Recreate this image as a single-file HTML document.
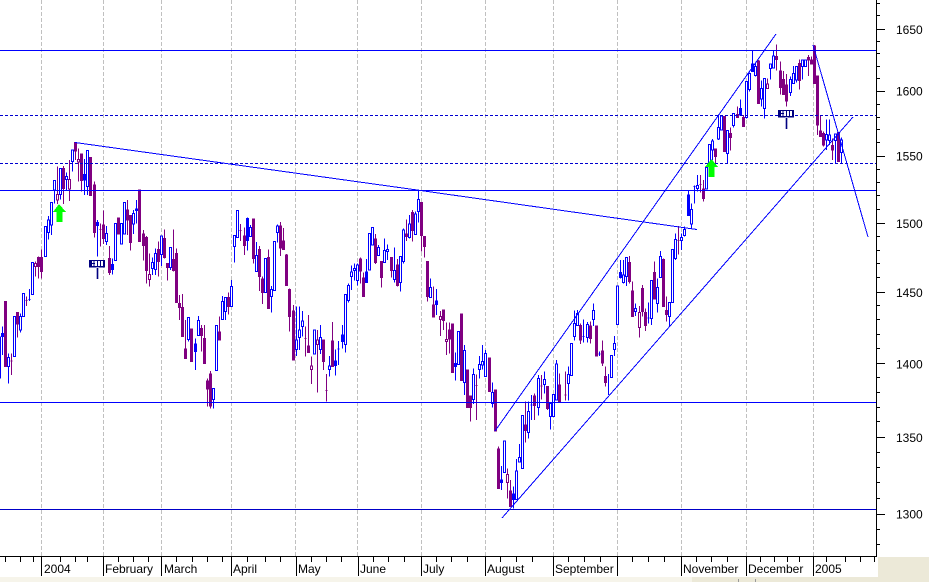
<!DOCTYPE html>
<html><head><meta charset="utf-8"><style>
html,body{margin:0;padding:0;background:#fff;width:929px;height:582px;overflow:hidden}
svg{display:block;position:absolute;left:0;top:0}
text{font:12px "Liberation Sans",sans-serif;fill:#000}
.c path{vector-effect:non-scaling-stroke;stroke-width:1px}
.bw{stroke:#00f;fill:none}.pw{stroke:#800080;fill:none}
.bh{stroke:#00f;fill:#fff}.ph{stroke:#800080;fill:#fff}
.bf{stroke:#00f;fill:#00f}.pf{stroke:#800080;fill:#800080}
</style></head><body>
<svg width="929" height="582" viewBox="0 0 929 582" shape-rendering="crispEdges">
<rect x="0" y="0" width="929" height="582" fill="#fff"/>
<rect x="878" y="557" width="51" height="25" fill="#ece9d8"/>
<rect x="0" y="577" width="929" height="5" fill="#ece9d8"/>
<rect x="0" y="577" width="692" height="5" fill="#f6f4ea"/>
<path d="M738.5 579V582M755.5 579V582" stroke="#999" fill="none"/>
<path d="M41.5 0V556M103.5 0V556M161.5 0V556M231.5 0V556M295.5 0V556M357.5 0V556M421.5 0V556M485.5 0V556M553.5 0V556M617.5 0V556M681.5 0V556M746.5 0V556M813.5 0V556" stroke="#c0c0c0" stroke-dasharray="4 2" fill="none"/>

<g class="c" transform="translate(0,140) scale(1,.33333)">
<path class="bw" d="M.5 590V715M2.5 560V645M8.5 640V730M20.5 520V578M29.5 447V483M48.5 228V298M51.5 187V285M54.5 121V190M60.5 85V178M66.5 97V150M72.5 30V95M84.5 57V165M87.5 32V165M97.5 240V350M106.5 258V315M112.5 355V403M133.5 210V282M136.5 180V250"/>
<path class="pw" d="M11.5 640V705M17.5 517V592M26.5 470V498M35.5 365V410M38.5 350V415M41.5 328V415M57.5 80V192M63.5 78V192M69.5 60V183M75.5 8V60M78.5 25V125M81.5 42V155M94.5 125V292M100.5 250V320M103.5 212V312M109.5 318V405M127.5 180V285M130.5 227V332M143.5 270V362"/>
<path class="bh" d="M7.5 652h2V680h-2zM13.5 530h2V650h-2zM19.5 530h2V570h-2zM22.5 460h2V530h-2zM31.5 367h2V464h-2zM44.5 260h2V350h-2zM47.5 240h2V278h-2zM50.5 187h2V255h-2zM53.5 121h2V150h-2zM59.5 85h2V163h-2zM65.5 110h2V118h-2zM71.5 30h2V65h-2zM86.5 32h2V140h-2zM105.5 280h2V305h-2zM114.5 250h2V362h-2zM120.5 250h2V312h-2zM123.5 187h2V282h-2zM132.5 220h2V252h-2z"/>
<path class="ph" d="M34.5 370h2V380h-2zM56.5 163h2V180h-2zM68.5 118h2V147h-2zM77.5 58h2V66h-2z"/>
<path class="bf" d="M1.5 580h2V590h-2zM28.5 478h2M83.5 103h2V120h-2zM96.5 247h2V257h-2zM111.5 373h2V388h-2zM135.5 207h2V212h-2z"/>
<path class="pf" d="M4.5 485h2V680h-2zM10.5 663h2M16.5 517h2V552h-2zM25.5 482h2M37.5 352h2V380h-2zM40.5 352h2V395h-2zM62.5 85h2V145h-2zM74.5 8h2V33h-2zM80.5 42h2V122h-2zM89.5 52h2V167h-2zM93.5 135h2V278h-2zM99.5 269h2M102.5 255h2V295h-2zM108.5 355h2V398h-2zM117.5 234h2V282h-2zM126.5 210h2V240h-2zM129.5 227h2V307h-2zM138.5 150h2V305h-2zM142.5 282h2V317h-2z"/>
</g>

<g class="c" transform="translate(0,180) scale(1,.33333)">
<path class="pw" d="M146.5 168V310M149.5 220V320M158.5 185V290M164.5 148V235M167.5 250V302M173.5 148V275M176.5 205V368M179.5 345V420M182.5 342V470M185.5 420V536M201.5 435V515M204.5 435V551M207.5 595V680M210.5 573V685M219.5 410V480M228.5 338V403M240.5 132V183M244.5 142V225M253.5 115V250M259.5 198V333M262.5 290V372M268.5 208V386M280.5 126V228M283.5 144V210M286.5 222V317M289.5 325V455M293.5 375V540"/>
<path class="bw" d="M152.5 232V285M155.5 205V285M161.5 168V258M170.5 203V270M188.5 412V485M195.5 475V570M198.5 408V466M213.5 625V685M222.5 348V418M225.5 352V420M231.5 300V380M234.5 166V248M247.5 112V212M250.5 135V170M256.5 186V276M271.5 318V398M277.5 133V188"/>
<path class="pf" d="M145.5 173h2V272h-2zM157.5 208h2V245h-2zM163.5 175h2V233h-2zM166.5 250h2V263h-2zM172.5 238h2V272h-2zM175.5 220h2V368h-2zM178.5 370h2V383h-2zM181.5 382h2V470h-2zM184.5 507h2V536h-2zM190.5 447h2V545h-2zM200.5 445h2V467h-2zM203.5 475h2V551h-2zM206.5 603h2V627h-2zM209.5 582h2V678h-2zM218.5 456h2V480h-2zM227.5 352h2V380h-2zM239.5 152h2M243.5 168h2V197h-2zM252.5 117h2V236h-2zM258.5 208h2V290h-2zM261.5 297h2V337h-2zM267.5 232h2V386h-2zM279.5 138h2V204h-2zM282.5 183h2V208h-2zM285.5 225h2V317h-2zM288.5 328h2V410h-2zM292.5 393h2V540h-2z"/>
<path class="ph" d="M148.5 283h2V298h-2z"/>
<path class="bh" d="M151.5 248h2V265h-2zM154.5 220h2V268h-2zM160.5 168h2V223h-2zM169.5 203h2V262h-2zM187.5 412h2V478h-2zM197.5 422h2V466h-2zM212.5 625h2V658h-2zM215.5 436h2V571h-2zM221.5 364h2V418h-2zM224.5 352h2V394h-2zM230.5 320h2V380h-2zM233.5 166h2V200h-2zM236.5 91h2V173h-2zM249.5 142h2V170h-2zM255.5 226h2V274h-2zM264.5 235h2V337h-2zM270.5 328h2V350h-2zM273.5 184h2V331h-2zM276.5 138h2V157h-2z"/>
<path class="bf" d="M194.5 492h2V515h-2zM246.5 115h2V182h-2z"/>
</g>

<g class="c" transform="translate(0,180) scale(1,.33333)">
<path class="bw" d="M296.5 380V528M299.5 380V510M302.5 393V470M320.5 435V522M329.5 528V590M335.5 508V587M338.5 483V555M342.5 435V505M345.5 343V517M348.5 310V368M351.5 257V330M354.5 250V302M357.5 250V317M366.5 237V308M378.5 195V227M384.5 175V247M387.5 193V240M394.5 202V308M400.5 230V335M403.5 145V250M409.5 105V175M415.5 95V165M418.5 30V128M430.5 295V352M436.5 327V405"/>
<path class="pw" d="M305.5 440V530M308.5 405V518M311.5 530V612M317.5 450V638M323.5 480V570M326.5 582V665M332.5 426V560M360.5 232V310M363.5 278V350M375.5 162V252M381.5 245V323M391.5 232V293M397.5 237V320M406.5 118V183M412.5 90V185M421.5 67V215M424.5 170V232M427.5 243V365M433.5 320V413"/>
<path class="bh" d="M295.5 480h2V508h-2zM298.5 450h2V473h-2zM301.5 423h2V440h-2zM313.5 450h2V522h-2zM319.5 472h2V508h-2zM328.5 558h2V568h-2zM344.5 343h2V493h-2zM347.5 316h2V362h-2zM350.5 276h2V290h-2zM353.5 265h2V272h-2zM356.5 255h2V302h-2zM368.5 160h2V270h-2zM371.5 142h2V195h-2zM377.5 203h2V227h-2zM383.5 212h2V247h-2zM386.5 208h2V214h-2zM393.5 272h2V298h-2zM399.5 230h2V307h-2zM402.5 150h2V245h-2zM408.5 132h2V173h-2zM414.5 102h2V163h-2zM417.5 58h2V95h-2zM429.5 322h2V352h-2z"/>
<path class="ph" d="M310.5 558h2V568h-2zM316.5 480h2V493h-2z"/>
<path class="bf" d="M334.5 543h2V557h-2zM337.5 507h2M341.5 465h2V485h-2zM365.5 276h2V308h-2zM435.5 363h2V374h-2z"/>
<path class="pf" d="M304.5 475h2M307.5 498h2V518h-2zM322.5 480h2V545h-2zM325.5 631h2M331.5 483h2V560h-2zM359.5 237h2V273h-2zM362.5 294h2V350h-2zM374.5 177h2V248h-2zM380.5 245h2V293h-2zM390.5 232h2V272h-2zM396.5 255h2V317h-2zM405.5 162h2V170h-2zM411.5 97h2V152h-2zM420.5 67h2V167h-2zM423.5 170h2V200h-2zM426.5 245h2V350h-2zM432.5 375h2V411h-2z"/>
</g>

<g class="c" transform="translate(0,230) scale(1,.33333)">
<path class="pw" d="M440.5 243V318M443.5 240V300M446.5 278V375M449.5 277V370M452.5 282V428M461.5 252V452M467.5 420V533M470.5 498V575M476.5 433V570"/>
<path class="bw" d="M455.5 368V452M458.5 305V404M464.5 345V495M473.5 415V522M479.5 378V445M482.5 345V418M485.5 360V440"/>
<path class="pf" d="M442.5 240h2V272h-2zM448.5 300h2V327h-2zM451.5 282h2V428h-2zM460.5 252h2V452h-2zM466.5 420h2V533h-2zM469.5 498h2V533h-2zM475.5 466h2"/>
<path class="ph" d="M439.5 260h2V268h-2zM445.5 328h2V335h-2z"/>
<path class="bh" d="M457.5 305h2V404h-2zM463.5 362h2V457h-2zM472.5 433h2V508h-2zM478.5 403h2V418h-2zM481.5 395h2V405h-2zM484.5 370h2V440h-2z"/>
<path class="bf" d="M454.5 400h2V410h-2z"/>
</g>

<g class="c" transform="translate(0,360) scale(1,.33333)">
<path class="pw" d="M498.5 260V385M507.5 325V415M510.5 360V440M525.5 125V248M534.5 100V180M541.5 45V118M547.5 80V150M559.5 40V127M565.5 35V122"/>
<path class="bw" d="M492.5 68V142M501.5 318V390M513.5 380V445M516.5 297V418M519.5 252V306M528.5 125V235M531.5 105V180M538.5 45V167M544.5 35V100M550.5 130V208M556.5 0V120M568.5 20V122"/>
<path class="pf" d="M488.5 -6h2V95h-2zM494.5 90h2V213h-2zM497.5 267h2V385h-2zM509.5 393h2V440h-2zM524.5 195h2V212h-2zM533.5 108h2V137h-2zM540.5 78h2M546.5 80h2V146h-2zM558.5 75h2V127h-2zM564.5 105h2"/>
<path class="ph" d="M506.5 343h2V368h-2z"/>
<path class="bh" d="M491.5 97h2V130h-2zM503.5 243h2V338h-2zM515.5 333h2V418h-2zM518.5 292h2V306h-2zM521.5 166h2V325h-2zM527.5 155h2V217h-2zM537.5 55h2V142h-2zM543.5 58h2V74h-2zM549.5 130h2V170h-2zM552.5 103h2V170h-2zM555.5 12h2V120h-2zM567.5 43h2V70h-2zM570.5 -50h2V47h-2z"/>
<path class="bf" d="M500.5 360h2V368h-2zM512.5 402h2V418h-2zM530.5 135h2"/>
</g>

<g class="c" transform="translate(0,220) scale(1,.33333)">
<path class="bw" d="M574.5 272V362M577.5 270V316M583.5 298V368M587.5 306V368M593.5 250V318M599.5 395V408M608.5 462V525M614.5 348V408M620.5 120V175M623.5 120V190M626.5 112V198M635.5 250V288M648.5 248V310M651.5 181V315M657.5 175V278M660.5 93V172M669.5 247V318M675.5 40V120M681.5 40V90M684.5 20V50"/>
<path class="pw" d="M580.5 310V372M590.5 305V370M602.5 362V438M605.5 440V500M629.5 108V190M632.5 185V290M639.5 258V353M642.5 195V290M645.5 265V333M654.5 125V237M663.5 115V260M666.5 230V305M678.5 18V103"/>
<path class="bh" d="M573.5 310h2V350h-2zM576.5 280h2V316h-2zM586.5 313h2V352h-2zM592.5 272h2V298h-2zM610.5 406h2V472h-2zM613.5 370h2V388h-2zM616.5 198h2V313h-2zM622.5 165h2V188h-2zM625.5 112h2V170h-2zM634.5 265h2V275h-2zM650.5 181h2V295h-2zM656.5 202h2V250h-2zM659.5 109h2V172h-2zM668.5 247h2V290h-2zM671.5 88h2V247h-2zM674.5 58h2V116h-2zM680.5 52h2V62h-2zM683.5 28h2V47h-2z"/>
<path class="bf" d="M582.5 350h2M598.5 402h2M619.5 157h2V172h-2zM647.5 294h2"/>
<path class="pf" d="M579.5 316h2V360h-2zM589.5 318h2V355h-2zM595.5 318h2V408h-2zM601.5 393h2V429h-2zM604.5 470h2V488h-2zM628.5 128h2V185h-2zM631.5 213h2V290h-2zM641.5 205h2V275h-2zM644.5 277h2V317h-2zM653.5 157h2V237h-2zM662.5 118h2V260h-2zM665.5 272h2V284h-2zM677.5 62h2"/>
<path class="ph" d="M638.5 277h2V323h-2z"/>
</g>

<g class="c" transform="translate(0,40) scale(1,.33333)">
<path class="bw" d="M688.5 452V527M691.5 490V567M694.5 437V490M697.5 405V455M712.5 297V360M718.5 225V300M721.5 226V270M727.5 272V370M733.5 221V262M740.5 178V225M746.5 124V235M749.5 97V155M752.5 32V95M755.5 68V110M761.5 122V200M764.5 115V235M770.5 70V118M773.5 32V84"/>
<path class="pw" d="M700.5 405V458M703.5 420V485M715.5 327V378M724.5 230V335M730.5 262V332M737.5 200V233M743.5 225V260M758.5 60V190M767.5 115V145"/>
<path class="bh" d="M690.5 508h2V552h-2zM696.5 436h2V446h-2zM705.5 382h2V447h-2zM708.5 313h2V380h-2zM711.5 303h2V330h-2zM717.5 262h2V297h-2zM720.5 228h2V270h-2zM726.5 272h2V340h-2zM732.5 221h2V257h-2zM745.5 124h2V233h-2zM748.5 100h2V148h-2zM754.5 80h2V106h-2zM760.5 145h2V177h-2zM763.5 115h2V205h-2zM769.5 72h2V85h-2zM772.5 48h2V84h-2z"/>
<path class="bf" d="M687.5 465h2V527h-2zM693.5 440h2M739.5 205h2V225h-2zM751.5 72h2V95h-2z"/>
<path class="pf" d="M699.5 434h2M702.5 447h2V476h-2zM714.5 327h2V350h-2zM723.5 230h2V335h-2zM729.5 280h2V293h-2zM736.5 224h2V233h-2zM742.5 232h2V260h-2zM757.5 63h2V190h-2z"/>
<path class="ph" d="M766.5 132h2V145h-2z"/>
</g>

<g class="c" transform="scale(1,.33333)">
<path class="pw" d="M776.5 133V212M780.5 185V283M783.5 213V283M786.5 222V320M799.5 178V268M808.5 165V228M811.5 170V192M814.5 135V250M817.5 228V405M820.5 345V410M823.5 395V440M832.5 415V480"/>
<path class="bw" d="M790.5 230V288M793.5 198V250M796.5 198V248M802.5 180V238M826.5 358V450M829.5 358V435M835.5 402V490M841.5 412V490"/>
<path class="pf" d="M775.5 170h2V178h-2zM779.5 213h2V262h-2zM782.5 238h2V283h-2zM785.5 255h2V303h-2zM798.5 190h2V242h-2zM807.5 172h2V180h-2zM810.5 180h2V192h-2zM813.5 138h2V250h-2zM816.5 228h2V375h-2zM819.5 393h2V410h-2zM822.5 400h2V435h-2zM831.5 437h2V450h-2zM837.5 397h2V485h-2z"/>
<path class="bh" d="M789.5 238h2V278h-2zM792.5 220h2V250h-2zM795.5 200h2V240h-2zM801.5 180h2V200h-2zM804.5 180h2V200h-2zM825.5 403h2V420h-2zM828.5 405h2V422h-2zM834.5 402h2V422h-2zM840.5 420h2V458h-2z"/>
</g>

<path d="M0 50.5H876M0 190.5H876M0 402.5H876" stroke="#00f" fill="none"/>
<path d="M0 509.5H876" stroke="#0000c8" fill="none"/>
<path d="M0 115.5H876M0 163.5H876" stroke="#0000d0" stroke-dasharray="3 2" fill="none"/>
<path d="M75 142.5L417 190L697 229.5M495 431L776 34M502 518L853 117M813 45L868 237" stroke="#00f" fill="none"/>

<path d="M59 204L66 212H62.5V222H56.5V212H53z" fill="#0f0"/>
<path d="M711.5 159L718 167H714.5V177H708.5V167H705z" fill="#0f0"/>

<rect x="89" y="260" width="16" height="7.5" fill="#000080"/>
<rect x="92" y="261" width="11" height="5" fill="#fff"/>
<path d="M94 261v5M97.5 261v5M100.5 261v5M92 263.5h3" stroke="#000080" fill="none"/>
<rect x="96" y="267" width="3" height="12" fill="#b0b0d8"/><rect x="97" y="268" width="1" height="11" fill="#000080"/>
<rect x="778" y="110" width="16" height="7.5" fill="#000080"/>
<rect x="781" y="111" width="11" height="5" fill="#fff"/>
<path d="M783 111v5M786.500 111v5M789.500 111v5M781 113.500h3" stroke="#000080" fill="none"/>
<rect x="785" y="117" width="3" height="12" fill="#b0b0d8"/><rect x="786" y="118" width="1" height="11" fill="#000080"/>

<path d="M876.500 0V556.500M0 556.500H877" stroke="#000" fill="none"/>
<path d="M876 3.500h4M876 15.500h4M876 29.500h9M876 41.500h4M876 53.500h4M876 66.500h4M876 78.500h4M876 91.500h9M876 104.500h4M876 117.500h4M876 129.500h4M876 142.500h4M876 156.500h9M876 169.500h4M876 182.500h4M876 195.500h4M876 209.500h4M876 223.500h9M876 236.500h4M876 250.500h4M876 263.500h4M876 277.500h4M876 292.500h9M876 305.500h4M876 319.500h4M876 334.500h4M876 348.500h4M876 363.500h9M876 377.500h4M876 392.500h4M876 407.500h4M876 421.500h4M876 437.500h9M876 452.500h4M876 467.500h4M876 482.500h4M876 498.500h4M876 514.500h9M876 529.500h4M876 544.500h4" stroke="#000" fill="none"/>
<path d="M41.500 556V576M103.500 556V576M161.500 556V576M231.500 556V576M296.500 556V576M358.500 556V576M421.500 556V576M485.500 556V576M553.500 556V576M617.500 556V576M681.500 556V576M746.500 556V576M813.500 556V576" stroke="#000" fill="none"/>
<path d="M5.500 557V562M20.500 557V562M33.500 557V562M60.500 557V562M75.500 557V562M87.500 557V562M118.500 557V562M133.500 557V562M148.500 557V562M176.500 557V562M192.500 557V562M207.500 557V562M222.500 557V562M247.500 557V562M265.500 557V562M280.500 557V562M311.500 557V562M326.500 557V562M341.500 557V562M373.500 557V562M388.500 557V562M404.500 557V562M436.500 557V562M451.500 557V562M467.500 557V562M500.500 557V562M516.500 557V562M532.500 557V562M568.500 557V562M584.500 557V562M600.500 557V562M632.500 557V562M648.500 557V562M664.500 557V562M696.500 557V562M711.500 557V562M727.500 557V562M760.500 557V562M774.500 557V562M787.500 557V562M799.500 557V562M826.500 557V562M845.500 557V562M860.500 557V562M874.500 557V562" stroke="#000" fill="none"/>

<g shape-rendering="auto">
<text x="896" y="34">1650</text><text x="896" y="95.500">1600</text><text x="896" y="160.500">1550</text><text x="896" y="228">1500</text><text x="896" y="297">1450</text><text x="896" y="368.500">1400</text><text x="896" y="442">1350</text><text x="896" y="518.500">1300</text>
<text x="44" y="573">2004</text><text x="105" y="573">February</text><text x="164" y="573">March</text><text x="233" y="573">April</text><text x="298" y="573">May</text><text x="360" y="573">June</text><text x="423" y="573">July</text><text x="487" y="573">August</text><text x="555" y="573">September</text><text x="683" y="573">November</text><text x="748" y="573">December</text><text x="815" y="573">2005</text>
</g>
</svg>
</body></html>
